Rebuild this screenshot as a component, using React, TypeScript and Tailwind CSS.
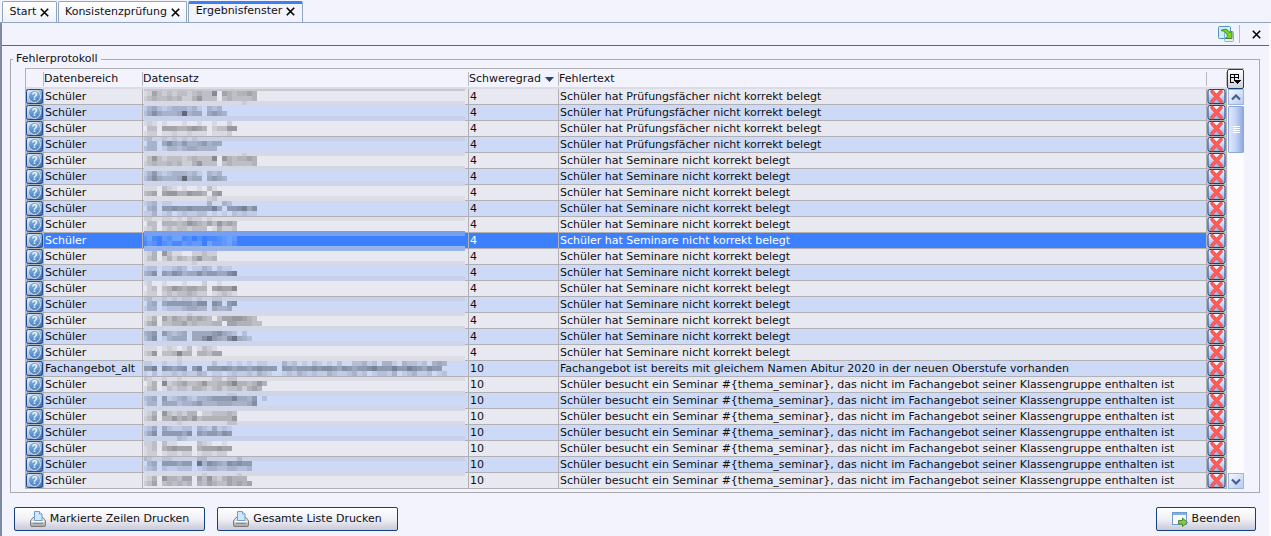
import React from 'react';

type Row = {
  area?: string;
  grade: number;
  text: string;
  // four 5px bands of the obscured name, one digit per block (0-9 = darkness)
  blocks: string[];
};

const PRUEFUNG = 'Schüler hat Prüfungsfächer nicht korrekt belegt';
const SEMINARE = 'Schüler hat Seminare nicht korrekt belegt';
const BESUCHT =
  'Schüler besucht ein Seminar #{thema_seminar}, das nicht im Fachangebot seiner Klassengruppe enthalten ist';

const rows: Row[] = [
  { grade: 4, text: PRUEFUNG, blocks: ['', '125323233234337 5434454', '234334342246333 3433334', '                    1'] },
  { grade: 4, text: PRUEFUNG, blocks: ['', '1342123332310323', '246433349344 4543', ''] },
  { grade: 4, text: PRUEFUNG, blocks: ['', '121 1   1  1  1  2', '033 555445654 23366', '122 112112111 1112'] },
  { grade: 4, text: PRUEFUNG, blocks: ['12  1 1 1 1', '033 464353345344', '233 13323443333', ''] },
  { grade: 4, text: SEMINARE, blocks: ['                    1', '136323332343337 6434454', '234334342246333 3433334', ''] },
  { grade: 4, text: SEMINARE, blocks: ['', '1352123332310323', '246433349344 4543', ''] },
  { grade: 4, text: SEMINARE, blocks: ['', '111 321 1  1 31', '345 566446554 56', '             12'] },
  { grade: 4, text: SEMINARE, blocks: ['', '123 11       3 032', '034 556556555574 556746', '113 12 121122 1 1 21211'] },
  { grade: 4, text: SEMINARE, blocks: ['11  11 1 211 1', '033 444346543536454', '123 232332333 14223', ''] },
  { grade: 4, text: SEMINARE, blocks: ['', '241 324412 20112343', '132 231132330422342', ''] },
  { grade: 4, text: SEMINARE, blocks: ['', '124 6311  22322', '134 24243246334', '          1'] },
  { grade: 4, text: SEMINARE, blocks: ['', '122 11232 1132 211', '346 546534464554467', ''] },
  { grade: 4, text: SEMINARE, blocks: ['', '12  1   1   2  1', '023 346545544 56557', '122 232334322 12321'] },
  { grade: 4, text: SEMINARE, blocks: ['12  1 1 11 1  11', '034 455555466 65 56', '133 122234433 4334', ''] },
  { grade: 4, text: SEMINARE, blocks: ['         1', '124 5354354543 35566543', '245 334453433344 5544433', ''] },
  { grade: 4, text: SEMINARE, blocks: ['', '345 53234 444456432 2', '246 13444 446854368432', ''] },
  { grade: 4, text: SEMINARE, blocks: ['', '111 121 13 1321', '236 334744 44355', '       1'] },
  {
    area: 'Fachangebot_alt',
    grade: 10,
    text: 'Fachangebot ist bereits mit gleichem Namen Abitur 2020 in der neuen Oberstufe vorhanden',
    blocks: [
      '',
      '11  1  1      2  1 1 1 11   312 1 21 1 2  22312 331 32212 343',
      '557 65456 57 55565455456555 55455565665465455675557557654655',
      '1 2 112121132 11 121121321  12132121132112312 12213 123112 12',
    ],
  },
  { grade: 10, text: BESUCHT, blocks: ['21  1  1      22 22', '024 723453346334457443464', '134 13233244323423342454', ''] },
  { grade: 10, text: BESUCHT, blocks: ['                 11', '234 5123421334555574435 2', '133 4442334533344433346', ''] },
  { grade: 10, text: BESUCHT, blocks: ['', '124 6323244 2233343', '235 446454634444446', '       1         22'] },
  { grade: 10, text: BESUCHT, blocks: ['', '124 421122 3214121', '246 555546 5455465', '       21'] },
  { grade: 10, text: BESUCHT, blocks: ['', '223 311    321  1', '123 456555 4555655', '122 122122 122122'] },
  { grade: 10, text: BESUCHT, blocks: ['21  11     22      2', '034 555455 83654365655', '123 211222 12332233223', ''] },
  { grade: 10, text: BESUCHT, blocks: ['            1      1', '124 644355 5363245444', '235 343434 43543354545', ''] },
];

const SELECTED = 9;
const GRID = [177, 177, 181];

function rowColor(i: number) {
  if (i === SELECTED) return [61, 128, 255];
  return i % 2 === 0 ? [232, 232, 241] : [204, 218, 247];
}

// average background of the five pixel lines starting at y
function bandColor(y: number) {
  const sum = [0, 0, 0];
  for (let p = y; p < y + 5; p++) {
    const c = p < 0 || p % 16 === 15 ? GRID : rowColor(Math.floor(p / 16));
    c.forEach((v, k) => (sum[k] += v));
  }
  return `rgb(${sum.map((v) => Math.round(v / 5)).join(',')})`;
}

function ObscuredName({ index, blocks }: { index: number; blocks: string[] }) {
  const offset = (((2 - index) % 5) + 5) % 5;
  return (
    <svg width="325" height="16" className="block" shapeRendering="crispEdges" aria-hidden="true">
      <rect y="15" width="325" height="1" fill="#b1b1b5" />
      {blocks.map((band, b) => {
        const y = offset + (b - 1) * 5;
        if (index === rows.length - 1 && y + 5 > 15) return null;
        return (
          <g key={b}>
            <rect x="1" y={y} width="321" height="5" fill={bandColor(index * 16 + y)} />
            {band.split('').map((d, k) =>
              Number(d) > 0 ? (
                <rect
                  key={k}
                  x={k === 0 ? 1 : 4 + (k - 1) * 5}
                  y={y}
                  width={k === 0 ? 3 : 5}
                  height="5"
                  fill={index === SELECTED ? '#ffffff' : '#16161c'}
                  fillOpacity={Number(d) * 0.065}
                />
              ) : null,
            )}
          </g>
        );
      })}
    </svg>
  );
}

function HelpIcon() {
  return (
    <svg width="17" height="15" viewBox="0 0 17 15" className="block" aria-hidden="true">
      <defs>
        <linearGradient id="help" x1="0" y1="0" x2="1" y2="1">
          <stop offset="0" stopColor="#e6f0fc" />
          <stop offset="0.5" stopColor="#9dbde6" />
          <stop offset="1" stopColor="#2c5c9f" />
        </linearGradient>
        <linearGradient id="helpBall" x1="0" y1="0" x2="0" y2="1">
          <stop offset="0" stopColor="#86b0e0" />
          <stop offset="1" stopColor="#4b83c4" />
        </linearGradient>
      </defs>
      <rect width="17" height="15" fill="#9fb6d6" />
      <rect x="0.5" y="0.5" width="16" height="14" rx="2" fill="url(#help)" stroke="#1d4a86" />
      <circle cx="8.5" cy="7.5" r="6" fill="url(#helpBall)" stroke="#cfe0f4" />
      <text x="8.5" y="11" textAnchor="middle" fontSize="10" fontWeight="700" fill="#f4f8fd" fontFamily="Liberation Sans, sans-serif">
        ?
      </text>
    </svg>
  );
}

function DeleteIcon() {
  return (
    <svg width="19" height="15" viewBox="0 0 19 15" className="block" aria-hidden="true">
      <defs>
        <linearGradient id="del" x1="0" y1="0" x2="0" y2="1">
          <stop offset="0" stopColor="#ffffff" />
          <stop offset="1" stopColor="#8fb0e8" />
        </linearGradient>
      </defs>
      <rect width="19" height="15" fill="#c3cde0" />
      <rect x="1" y="0.5" width="17" height="14" rx="2" fill="url(#del)" stroke="#173f78" />
      <path d="M5 2.5 14 12.500M14 2.500 5 12.500" stroke="#e2505c" strokeWidth="3.600" strokeLinecap="round" />
      <path d="M5 2.500 14 12.500M14 2.500 5 12.500" stroke="#ff5f56" strokeWidth="2.400" strokeLinecap="round" />
    </svg>
  );
}

function PrinterIcon() {
  return (
    <svg width="16" height="16" viewBox="0 0 16 16" aria-hidden="true">
      <defs>
        <linearGradient id="printer" x1="0" y1="0" x2="0" y2="1">
          <stop offset="0" stopColor="#f4f4f4" />
          <stop offset="1" stopColor="#a4a4a4" />
        </linearGradient>
      </defs>
      <path d="M1.500 8.500 3 6.500h10l1.500 2 1 1.500v4a1.500 1.500 0 0 1-1.500 1.500H2A1.500 1.500 0 0 1 .5 14v-4z" fill="url(#printer)" stroke="#7b7b7b" />
      <path d="M4.500 9.500v-9h5l2.500 2.500v6.500z" fill="#d3e7fc" stroke="#6a9fd6" />
      <path d="M9.500.5v2.500H12" fill="#ffffff" stroke="#6a9fd6" />
      <path d="M1.500 10.500h13" stroke="#ffffff" />
      <path d="M3 12.500h10" stroke="#8d8d8d" />
    </svg>
  );
}

function ExitIcon() {
  return (
    <svg width="16" height="16" viewBox="0 0 16 16" aria-hidden="true">
      <rect x="0.5" y="1.500" width="14" height="12" fill="#f6faff" stroke="#6d9bd0" />
      <rect x="1" y="2" width="13" height="2" fill="#7fb0e6" />
      <path d="M6.500 9.500h4v-2.500l5 4.500-5 4v-2.500h-4z" fill="#8cc44c" stroke="#4d8a22" />
    </svg>
  );
}

function DetachIcon() {
  return (
    <svg width="16" height="16" viewBox="0 0 16 16" aria-hidden="true">
      <rect x="0.500" y="0.500" width="12" height="12" rx="1" fill="#d8ebfa" stroke="#4f97b8" />
      <rect x="6.500" y="5.500" width="9" height="10" rx="1" fill="#e2f0fb" stroke="#7fb3d8" />
      <path d="M3 4.500c3-2 7-1.500 8.500 2l2.500-1v7h-7l2.500-2C9 7.500 7 5 3 4.500z" fill="#7ad321" stroke="#3d8a24" />
    </svg>
  );
}

function ColumnIcon() {
  return (
    <svg width="11" height="11" viewBox="0 0 11 11" shapeRendering="crispEdges" aria-hidden="true">
      <path d="M4 8.500H.5v-8h8V5M.5 3.500h8M4.500.5v6" fill="none" stroke="#000000" />
      <path d="M3 6h8L7 10z" fill="#000000" />
    </svg>
  );
}

function CloseIcon() {
  return (
    <svg width="9" height="9" viewBox="0 0 9 9" aria-hidden="true">
      <path d="M.8.8 8.200 8.200M8.200.8.8 8.200" stroke="#000000" strokeWidth="1.600" />
    </svg>
  );
}

function Chevron({ down }: { down?: boolean }) {
  return (
    <svg width="10" height="7" viewBox="0 0 10 7" aria-hidden="true">
      <path d={down ? 'M1 1.500 5 5.500 9 1.500' : 'M1 5.500 5 1.500 9 5.500'} fill="none" stroke="#43618f" strokeWidth="2.200" />
    </svg>
  );
}

const tabs = [
  { label: 'Start', active: false, width: 'w-[55px]' },
  { label: 'Konsistenzprüfung', active: false, width: 'w-[129px]' },
  { label: 'Ergebnisfenster', active: true, width: 'w-[115px]' },
];

const headers = ['', 'Datenbereich', 'Datensatz', 'Schweregrad', 'Fehlertext', ''];

const pushButton =
  'flex h-6 items-center justify-center gap-1 rounded-[2px] border border-[#17407a] bg-linear-to-b from-white via-[#f0f0f6] to-[#c9c9d8]';
const scrollButton =
  'flex h-4 shrink-0 items-center justify-center border border-[#9db4dc] bg-linear-to-br from-[#f4f7ff] to-[#b9caf0]';

export default function App() {
  return (
    <div className="flex h-screen flex-col overflow-hidden bg-[#f3f3fe] font-['DejaVu_Sans',sans-serif] text-[11px] leading-[14px] text-[#101014]">
      {/* Tabs */}
      <nav className="flex h-[23px] shrink-0 items-end gap-px border-b border-[#8fa5c2] pl-[2px]">
        {tabs.map((tab) => (
          <div
            key={tab.label}
            className={`flex h-[21px] items-center justify-center gap-1 rounded-t-[2px] border border-b-0 border-[#8fa5c2] ${tab.width} ${
              tab.active ? 'border-t-[3px] border-t-[#3d80f0] bg-[#f3f3fe] pb-1' : 'bg-linear-to-b from-white to-[#f0f0fb]'
            }`}
          >
            <button>{tab.label}</button>
            <button aria-label={`${tab.label} schließen`}>
              <CloseIcon />
            </button>
          </div>
        ))}
      </nav>

      <div className="flex min-h-0 flex-1 flex-col border-r-2 border-l-2 border-r-[#fafaff] border-l-[#7d8ba2]">
        {/* Toolbar */}
        <div className="flex h-[23px] shrink-0 items-center justify-end border-b border-[#66666e]">
          <button aria-label="Fenster ablösen" className="mr-[5px]">
            <DetachIcon />
          </button>
          <span className="h-[18px] w-px bg-[#b9b9c0]" />
          <button aria-label="Schließen" className="flex w-[29px] justify-center pl-1">
            <CloseIcon />
          </button>
        </div>

        {/* Error log */}
        <fieldset className="mt-[6px] mr-[9px] ml-2 border border-[#a9a9b0] pr-[15px] pb-[3px] pl-[14px]">
          <legend className="-ml-3 px-[3px]">Fehlerprotokoll</legend>
          <div className="mt-[2px] flex border-t border-l border-[#b1b1b5]">
            <table className="min-w-0 flex-1 table-fixed border-separate border-spacing-0">
              <colgroup>
                <col className="w-[18px]" />
                <col className="w-[99px]" />
                <col className="w-[326px]" />
                <col className="w-[90px]" />
                <col />
                <col className="w-5" />
              </colgroup>
              <thead>
                <tr className="h-5">
                  {headers.map((label, i) => (
                    <th key={i} className="border-b-2 border-[#dcdce6] p-0 pt-[2px] text-left font-normal whitespace-nowrap">
                      <div className="flex h-[14px] items-center border-r border-[#b9b9c0]">
                        {label}
                        {label === 'Schweregrad' && (
                          <svg width="9" height="5" viewBox="0 0 9 5" className="ml-1" aria-hidden="true">
                            <path d="M0 0h9L4.500 5z" fill="#24466b" />
                          </svg>
                        )}
                      </div>
                    </th>
                  ))}
                </tr>
              </thead>
              <tbody className="[&_td]:h-4 [&_td]:overflow-hidden [&_td]:border-[#b1b1b5] [&_td]:p-0 [&_td]:leading-[15px] [&_td]:whitespace-nowrap">
                {rows.map((row, i) => (
                  <tr
                    key={i}
                    className={
                      i === SELECTED ? 'bg-[#3d80ff] text-white' : i % 2 === 0 ? 'bg-[#e8e8f1]' : 'bg-[#ccdaf7]'
                    }
                  >
                    <td className="border-r border-b">
                      <button className="block" aria-label="Hilfe">
                        <HelpIcon />
                      </button>
                    </td>
                    <td className="border-r border-b">
                      <div className="pl-px">{row.area ?? 'Schüler'}</div>
                    </td>
                    <td className="border-r">
                      <ObscuredName index={i} blocks={row.blocks} />
                    </td>
                    <td className="border-r border-b">
                      <div className="pl-px">{row.grade}</div>
                    </td>
                    <td className="border-r border-b">
                      <div className="pl-px">{row.text}</div>
                    </td>
                    <td className="border-r border-b">
                      <button className="block" aria-label="Zeile löschen">
                        <DeleteIcon />
                      </button>
                    </td>
                  </tr>
                ))}
              </tbody>
            </table>

            {/* Scrollbar */}
            <div className="flex w-[17px] shrink-0 flex-col">
              <button
                aria-label="Spalten auswählen"
                className="flex h-5 shrink-0 items-center justify-center rounded-[2px] border border-[#17407a] bg-linear-to-b from-white to-[#cfcfdb]"
              >
                <ColumnIcon />
              </button>
              <div className="ml-px flex flex-1 flex-col bg-[#fcfcff]">
                <button aria-label="Nach oben" className={scrollButton}>
                  <Chevron />
                </button>
                <div className="mt-px flex h-[47px] flex-col items-center justify-center gap-px rounded-[1px] border border-[#8fa9d8] bg-linear-to-r from-[#dfe8fc] via-[#c3d2f5] to-[#8ea9e2]">
                  <span className="h-px w-[7px] bg-white" />
                  <span className="h-px w-[7px] bg-white" />
                  <span className="h-px w-[7px] bg-white" />
                  <span className="h-px w-[7px] bg-white" />
                </div>
                <button aria-label="Nach unten" className={`mt-auto ${scrollButton}`}>
                  <Chevron down />
                </button>
              </div>
            </div>
          </div>
        </fieldset>

        {/* Actions */}
        <div className="mt-[14px] mr-[13px] ml-3 flex gap-3">
          <button className={`w-[191px] ${pushButton}`}>
            <PrinterIcon />
            Markierte Zeilen Drucken
          </button>
          <button className={`w-[181px] ${pushButton}`}>
            <PrinterIcon />
            Gesamte Liste Drucken
          </button>
          <button className={`ml-auto w-[100px] ${pushButton}`}>
            <ExitIcon />
            Beenden
          </button>
        </div>
      </div>
    </div>
  );
}
